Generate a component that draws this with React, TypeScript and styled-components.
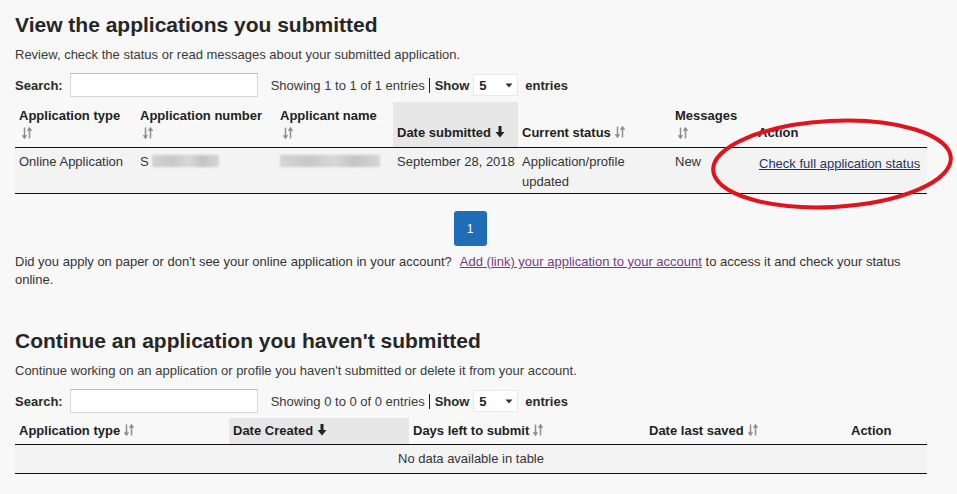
import React from "react";
import styled, { createGlobalStyle } from "styled-components";

const GlobalStyle = createGlobalStyle`
  html, body {
    margin: 0;
    padding: 0;
    background: #f8f8f8;
  }
  body {
    font-family: "Liberation Sans", Arial, sans-serif;
    font-size: 13px;
    color: #333;
  }
`;

const Page = styled.div`
  position: relative;
  width: 957px;
  height: 494px;
  box-sizing: border-box;
  padding: 13px 30px 0 15px;
  overflow: hidden;
`;

const Title = styled.h2<{ $top?: number }>`
  margin: ${(p) => p.$top || 0}px 0 0;
  font-size: 21px;
  line-height: 24px;
  font-weight: bold;
  color: #262626;
`;

const Lead = styled.p`
  margin: 9px 0 0;
  line-height: 18px;
  font-size: 13px;
  color: #3a3a3a;
`;

const Toolbar = styled.div`
  margin-top: 9px;
  height: 24px;
  display: flex;
  align-items: center;
`;

const Label = styled.span`
  font-weight: bold;
  color: #2a2a2a;
`;

const SearchInput = styled.input`
  margin-left: 7px;
  width: 188px;
  height: 24px;
  box-sizing: border-box;
  border: 1px solid #d6d6d6;
  border-top-color: #bdbdbd;
  background: #fff;
`;

const Info = styled.span`
  margin-left: 13px;
  color: #3a3a3a;
`;

const Divider = styled.span`
  display: inline-block;
  width: 1px;
  height: 15px;
  background: #222;
  margin: 0 5px 0 4px;
  vertical-align: -3px;
`;

const FakeSelect = styled.div`
  margin-left: 4px;
  width: 45px;
  height: 22px;
  box-sizing: border-box;
  background: #fff;
  border: 1px solid #eaeaea;
  display: flex;
  align-items: center;
  justify-content: space-between;
  padding: 0 4px 0 5px;
  color: #222;
  font-weight: bold;
`;

const Entries = styled(Label)`
  margin-left: 7px;
`;

const Table = styled.table`
  margin-top: 5px;
  width: 912px;
  border-collapse: collapse;
  table-layout: fixed;
`;

const Th = styled.th<{ $sorted?: boolean; $compact?: boolean }>`
  box-sizing: border-box;
  text-align: left;
  vertical-align: bottom;
  font-weight: bold;
  color: #222;
  line-height: 17px;
  padding: ${(p) => (p.$compact ? "4px 4px 5px" : "5px 4px 6px")};
  background: ${(p) => (p.$sorted ? "#e7e7e7" : "transparent")};
  border-bottom: 1px solid #111;
`;

const Td = styled.td<{ $compact?: boolean; $center?: boolean; $nowrap?: boolean }>`
  vertical-align: top;
  line-height: 20px;
  padding: ${(p) => (p.$compact ? "4px 4px" : "4px 4px 1px")};
  text-align: ${(p) => (p.$center ? "center" : "left")};
  white-space: ${(p) => (p.$nowrap ? "nowrap" : "normal")};
  color: #333;
  background: #f3f3f3;
  border-bottom: 1px solid #111;
`;

const Blur = styled.span<{ $w: number }>`
  display: inline-block;
  width: ${(p) => p.$w}px;
  height: 12px;
  vertical-align: -1px;
  background: linear-gradient(90deg, #d4d4d4, #c8c8c8 30%, #d8d8d8 55%, #c4c4c4 75%, #d6d6d6);
  filter: blur(1.2px);
`;

const StatusLink = styled.a`
  color: #1e3562;
  text-decoration: underline;
  margin-left: 1px;
  position: relative;
  top: 2px;
`;

const Pager = styled.div`
  margin-top: 17px;
  width: 912px;
  display: flex;
  justify-content: center;
`;

const PageButton = styled.button`
  width: 33px;
  height: 35px;
  border: none;
  border-radius: 3px;
  background: #1e6db6;
  color: #fff;
  font-family: inherit;
  font-size: 12px;
  margin-left: -2px;
`;

const Note = styled.p`
  margin: 7px 0 0;
  line-height: 18px;
  font-size: 13px;
  color: #333;
  width: 912px;
`;

const NoteLink = styled.a`
  color: #7a3b86;
  text-decoration: underline;
  margin-left: 8px;
`;

const IconWrap = styled.span<{ $block?: boolean }>`
  display: ${(p) => (p.$block ? "block" : "inline-block")};
  margin-left: ${(p) => (p.$block ? "3px" : "4px")};
  vertical-align: -1px;
  line-height: 0;
  height: ${(p) => (p.$block ? "17px" : "auto")};
  padding-top: ${(p) => (p.$block ? "3px" : "0")};
  box-sizing: border-box;
`;

const Annotation = styled.svg`
  position: absolute;
  left: 704px;
  top: 112px;
  pointer-events: none;
`;

const SortBoth = () => (
  <svg width="10" height="12" viewBox="0 0 10 12">
    <g stroke="#8f8f8f" strokeWidth="1.5" fill="none">
      <path d="M2.5 0.5 V10.5" />
      <path d="M0.6 8.2 L2.5 11 L4.4 8.2" />
      <path d="M7.5 1.5 V11.5" />
      <path d="M5.6 3.8 L7.5 1 L9.4 3.8" />
    </g>
  </svg>
);

const SortDesc = () => (
  <svg width="10" height="12" viewBox="0 0 10 12">
    <rect x="3.5" y="0" width="3" height="6.5" fill="#222" />
    <path d="M0.5 6 H9.5 L5 11.5 Z" fill="#222" />
  </svg>
);

const Caret = () => (
  <svg width="8" height="5" viewBox="0 0 8 5">
    <path d="M0.5 0.5 H7.5 L4 4.5 Z" fill="#333" />
  </svg>
);

type Column = { label: string; width: number; sort?: "both" | "desc"; stack?: boolean };

const HeaderCell = ({ col, compact }: { col: Column; compact?: boolean }) => (
  <Th $sorted={col.sort === "desc"} $compact={compact} style={{ width: col.width }}>
    {col.label}
    {col.sort && (
      <IconWrap $block={col.stack}>{col.sort === "desc" ? <SortDesc /> : <SortBoth />}</IconWrap>
    )}
  </Th>
);

const Controls = ({ info }: { info: string }) => (
  <Toolbar>
    <Label>Search:</Label>
    <SearchInput type="text" />
    <Info>{info}</Info>
    <Divider />
    <Label>Show</Label>
    <FakeSelect>
      <span>5</span>
      <Caret />
    </FakeSelect>
    <Entries>entries</Entries>
  </Toolbar>
);

const submittedCols: Column[] = [
  { label: "Application type", width: 121, sort: "both", stack: true },
  { label: "Application number", width: 140, sort: "both", stack: true },
  { label: "Applicant name", width: 117, sort: "both", stack: true },
  { label: "Date submitted", width: 125, sort: "desc" },
  { label: "Current status", width: 153, sort: "both" },
  { label: "Messages", width: 83, sort: "both", stack: true },
  { label: "Action", width: 173 },
];

const draftCols: Column[] = [
  { label: "Application type", width: 214, sort: "both" },
  { label: "Date Created", width: 180, sort: "desc" },
  { label: "Days left to submit", width: 236, sort: "both" },
  { label: "Date last saved", width: 202, sort: "both" },
  { label: "Action", width: 80 },
];

const App = () => (
  <>
    <GlobalStyle />
    <Page>
      <Title>View the applications you submitted</Title>
      <Lead>Review, check the status or read messages about your submitted application.</Lead>
      <Controls info="Showing 1 to 1 of 1 entries" />
      <Table>
        <thead>
          <tr>
            {submittedCols.map((c) => (
              <HeaderCell key={c.label} col={c} />
            ))}
          </tr>
        </thead>
        <tbody>
          <tr>
            <Td>Online Application</Td>
            <Td>
              S <Blur $w={67} />
            </Td>
            <Td>
              <Blur $w={100} />
            </Td>
            <Td $nowrap>September 28, 2018</Td>
            <Td>Application/profile updated</Td>
            <Td>New</Td>
            <Td>
              <StatusLink href="#">Check full application status</StatusLink>
            </Td>
          </tr>
        </tbody>
      </Table>
      <Pager>
        <PageButton>1</PageButton>
      </Pager>
      <Note>
        Did you apply on paper or don't see your online application in your account?
        <NoteLink href="#">Add (link) your application to your account</NoteLink> to access it and check your
        status online.
      </Note>

      <Title $top={40}>Continue an application you haven't submitted</Title>
      <Lead>Continue working on an application or profile you haven't submitted or delete it from your account.</Lead>
      <Controls info="Showing 0 to 0 of 0 entries" />
      <Table>
        <thead>
          <tr>
            {draftCols.map((c) => (
              <HeaderCell key={c.label} col={c} compact />
            ))}
          </tr>
        </thead>
        <tbody>
          <tr>
            <Td $compact $center colSpan={5}>
              No data available in table
            </Td>
          </tr>
        </tbody>
      </Table>

      <Annotation width="253" height="104" viewBox="0 0 253 104">
        <g transform="rotate(-3 128 52)" fill="none" stroke="#e3121c" strokeLinecap="round">
          <ellipse cx="128" cy="52" rx="119" ry="43" strokeWidth="4" />
        </g>
      </Annotation>
    </Page>
  </>
);

export default App;
